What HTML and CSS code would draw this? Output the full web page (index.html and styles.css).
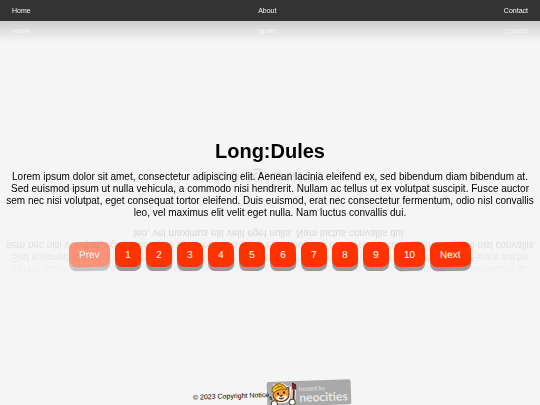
FILE: index.html
```html
<!DOCTYPE html>
<html lang="en">
  <head>
    <meta charset="UTF-8" />
    <meta name="viewport" content="width=device-width, initial-scale=1.0" />
    <title>Long:Dules</title>
    <link rel="stylesheet" href="styles.css">
  </head>

  <body>
    <nav class="navbar">
      <a href="#home">Home</a>
      <a href="#about">About</a>
      <a href="#contact">Contact</a>
    </nav>

    <main class="content">
      <h1>Long:Dules</h1>
      <p class="intro">
        Lorem ipsum dolor sit amet, consectetur adipiscing elit. Aenean lacinia
        eleifend ex, sed bibendum diam bibendum at. Sed euismod ipsum ut nulla
        vehicula, a commodo nisi hendrerit. Nullam ac tellus ut ex volutpat
        suscipit. Fusce auctor sem nec nisi volutpat, eget consequat tortor
        eleifend. Duis euismod, erat nec consectetur fermentum, odio nisl
        convallis leo, vel maximus elit velit eget nulla. Nam luctus convallis
        dui.
      </p>
      <div class="pagination">
        <button type="button" disabled>Prev</button>
        <button type="button">1</button>
        <button type="button">2</button>
        <button type="button">3</button>
        <button type="button">4</button>
        <button type="button">5</button>
        <button type="button">6</button>
        <button type="button">7</button>
        <button type="button">8</button>
        <button type="button">9</button>
        <button type="button">10</button>
        <button type="button">Next</button>
      </div>
    </main>

    <footer class="footer">
      <span class="copyright">© 2023 Copyright Notice</span>
      <a class="badge" href="#neocities">
        <svg class="cat" viewBox="0 0 30 26" width="30" height="26" aria-hidden="true">
          <path d="M6 8 L7 3 L11 4 Q15 0 20 5 L24 6 L23 13 Q23 20 17 21 L12 21 Q4 19 6 8Z" fill="#fff" stroke="#fff" />
          <path d="M6 12 L7 6 L11 7 L18 7 L22 6 L22 13 Q22 19 15 20 Q7 20 6 14Z" fill="#f39a32" stroke="#4a2c12" />
          <path d="M5 9 Q6 3 12 2 Q18 2 20 8 Q13 6 7 11Z" fill="#f5c62c" stroke="#8a5c14" />
          <path d="M8 7 L16 4 M10 4 L17 6" stroke="#a8731b" fill="none" />
          <path d="M9 16 Q12 13 15 15 Q18 13 20 15 Q18 19 14 19 Q10 19 9 16Z" fill="#fff" />
          <path d="M11 11 V13 M17 10 V12" stroke="#2a1a10" stroke-width="2" />
          <path d="M13 14 H15 L14 15Z M12 16 Q14 19 17 16" fill="#a33a22" stroke="#6a2a18" />
          <path d="M26 21 L27 8" stroke="#fff" stroke-width="4" stroke-linecap="round" />
          <path d="M26 21 L27 9" stroke="#4a2c12" stroke-width="2" />
          <path d="M26 8 L26 2 L29 4 L29 8Z" fill="#9c1f2c" stroke="#4d1520" />
          <circle cx="7" cy="22" r="3" fill="#fff" stroke="#5b4630" />
          <circle cx="25" cy="21" r="3" fill="#fff" stroke="#5b4630" />
          <path d="M2 15 Q4 13 5 16 L5 18 L3 18Z" fill="#55534f" />
        </svg>
        <span class="badge-text">
          <small>hosted by</small>
          <b>neocities</b>
        </span>
      </a>
    </footer>
  </body>
</html>
```
FILE: styles.css
```css
* {
  box-sizing: border-box;
}

body {
  margin: 0;
  min-height: 100vh;
  display: flex;
  flex-direction: column;
  overflow: hidden;
  font-family: "Liberation Sans", Arial, sans-serif;
  font-size: 10px;
  line-height: 12px;
  color: #000;
  background-color: #f5f5f5;
}

.navbar {
  display: flex;
  justify-content: space-between;
  padding: 5px 12px 4px;
  background-color: #333;
  font-size: 7px;
  -webkit-box-reflect: below 0 linear-gradient(transparent, rgba(0, 0, 0, 0.2));
}

.navbar a {
  color: #f5f5f5;
  text-decoration: none;
}

.content {
  flex: 1;
  display: flex;
  flex-direction: column;
  justify-content: center;
  padding-top: 3px;
  text-align: center;
}

h1 {
  margin: 0;
  padding-bottom: 2px;
  font-size: 20px;
  line-height: 24px;
  -webkit-box-reflect: below 0 linear-gradient(transparent, rgba(0, 0, 0, 0.1));
}

.intro {
  margin: 0;
  padding: 6px 2px 4px;
  -webkit-box-reflect: below 0 linear-gradient(transparent, rgba(0, 0, 0, 0.15));
}

.pagination {
  display: flex;
  justify-content: center;
  gap: 5px;
  margin-top: 19px;
}

.pagination button {
  min-width: 26px;
  height: 25px;
  padding: 0 10px;
  border: none;
  border-radius: 7px;
  background-color: #ff3300;
  box-shadow: 0 4px #999;
  color: #fff;
  font: inherit;
  cursor: pointer;
  transform: rotate(-1deg);
}

.pagination button:disabled {
  opacity: 0.5;
  cursor: default;
}

.footer {
  display: flex;
  justify-content: center;
  align-items: center;
  margin-bottom: -2px;
  padding-left: 4px;
  font-size: 7px;
  transform: rotate(-2deg);
}

/* keep the text on top where the badge overlaps it */
.copyright {
  z-index: 1;
}

.badge {
  display: flex;
  align-items: center;
  width: 84px;
  height: 25px;
  margin-left: -2px;
  border-radius: 2px;
  background-color: #a9a9a9;
  color: #e6e6e6;
  text-decoration: none;
}

.cat {
  flex: none;
}

.badge-text {
  display: flex;
  flex-direction: column;
  padding-left: 2px;
  font-family: Lato, sans-serif;
}

.badge-text small {
  font-size: 6px;
  line-height: 7px;
}

.badge-text b {
  font-size: 12px;
  line-height: 11px;
}
```
